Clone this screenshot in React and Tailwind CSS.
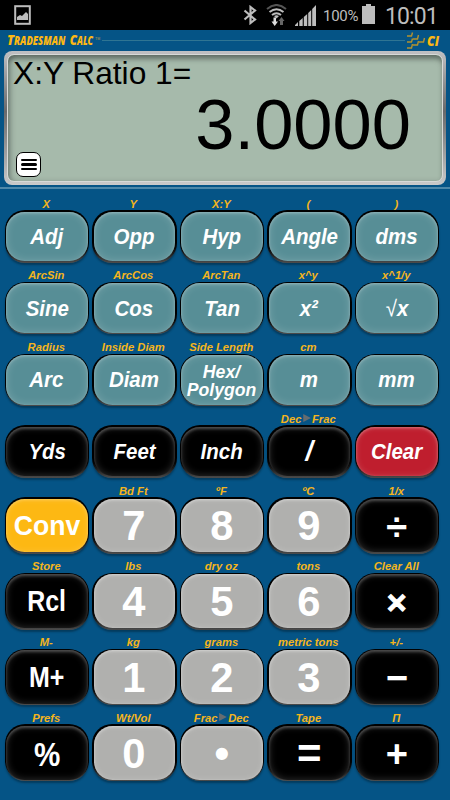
import { clsx } from "clsx";

const TONES = {
  teal: "bg-[#578e96] shadow-[inset_0_1px_3px_0px_rgba(255,255,255,0.3),inset_0_0_9px_1px_rgba(255,255,255,0.16)]",
  black: "bg-black shadow-[inset_0_2px_3px_0px_rgba(255,255,255,0.24),inset_0_0_7px_1px_rgba(255,255,255,0.16)]",
  red: "bg-[#bf1e2e] shadow-[inset_0_1px_3px_0px_rgba(255,255,255,0.35),inset_0_0_7px_0px_rgba(255,255,255,0.15)]",
  yellow: "bg-[#fdb813] shadow-[inset_0_1px_3px_0px_rgba(255,255,255,0.25),inset_0_0_7px_0px_rgba(255,255,255,0.15)]",
  gray: "bg-[#b0b0ae] shadow-[inset_0_1px_3px_0px_rgba(255,255,255,0.4),inset_0_0_7px_0px_rgba(255,255,255,0.18)]",
};

const FACES = {
  fn: "pt-px text-[22px] italic scale-x-[0.93]",
  small: "pt-[2px] text-[18px] leading-[18.5px] italic scale-x-[0.98]",
  slash: "text-[27px] italic",
  word: "pt-px text-[28px] scale-x-[0.95]",
  mem: "pt-px text-[29px] scale-x-[0.86]",
  percent: "pt-0.5 text-[34px] scale-x-[0.87]",
  digit: "pt-px text-[43px] scale-x-[0.97]",
  op: "pt-[3px] text-[38px]",
  times: "pt-px text-[34px] [-webkit-text-stroke:1px_white]",
  equals: "pt-[3px] text-[42px]",
  dot: "pt-0.5 text-[42px]",
};

const k = (text, label = "", tone = "teal", face = "fn") => ({ text, label, tone, face });
const n = (text, label) => k(text, label, "gray", "digit");

const UPPER = [
  [k("Adj", "X"), k("Opp", "Y"), k("Hyp", "X:Y"), k("Angle", "("), k("dms", ")")],
  [k("Sine", "ArcSin"), k("Cos", "ArcCos"), k("Tan", "ArcTan"), k("x²", "x^y"), k("√x", "x^1/y")],
  [k("Arc", "Radius"), k("Diam", "Inside Diam"), k("Hex/\nPolygon", "Side Length", "teal", "small"), k("m", "cm"), k("mm")],
  [k("Yds", "", "black"), k("Feet", "", "black"), k("Inch", "", "black"), k("/", "Dec>Frac", "black", "slash"), k("Clear", "", "red")],
];

const LOWER = [
  [k("Conv", "", "yellow", "word"), n("7", "Bd Ft"), n("8", "ºF"), n("9", "ºC"), k("÷", "1/x", "black", "op")],
  [k("Rcl", "Store", "black", "mem"), n("4", "lbs"), n("5", "dry oz"), n("6", "tons"), k("×", "Clear All", "black", "times")],
  [k("M+", "M-", "black", "mem"), n("1", "kg"), n("2", "grams"), n("3", "metric tons"), k("−", "+/-", "black", "op")],
  [k("%", "Prefs", "black", "percent"), n("0", "Wt/Vol"), k("•", "Frac>Dec", "gray", "dot"), k("=", "Tape", "black", "equals"), k("+", "Π", "black", "op")],
];

function Label({ text }) {
  const parts = text.split(">");
  return (
    <div className="flex h-[15px] scale-x-[0.96] items-center justify-center pr-[2px] pt-px text-[11.7px] leading-[13px] font-bold whitespace-nowrap text-[#f5b51c] italic">
      <span>{parts[0]}</span>
      {parts[1] && (
        <>
          <svg className="mx-px h-2 w-[9px]" viewBox="0 0 9 8">
            <path d="M1 0L9 4L1 8Z" fill="#666c70" />
          </svg>
          <span>{parts[1]}</span>
        </>
      )}
    </div>
  );
}

function Key({ item, tall }) {
  return (
    <div>
      <Label text={item.label} />
      <button
        className={clsx(
          "block w-[84.5px] rounded-[20px] bg-linear-to-b from-black from-60% to-[#4c4c4c] p-[1.5px] shadow-[0_2px_2px_rgba(0,0,0,0.3)]",
          tall ? "h-[56.8px]" : "h-[52.7px]"
        )}
      >
        <span className={clsx("flex h-full w-full items-center justify-center rounded-[18.5px]", TONES[item.tone])}>
          <span className={clsx("text-center leading-none font-bold whitespace-pre text-white", FACES[item.face])}>
            {item.text === "√x" ? (
              <>
                <span className="font-normal not-italic">√</span>x
              </>
            ) : (
              item.text
            )}
          </span>
        </span>
      </button>
    </div>
  );
}

function Row({ items, tall }) {
  return (
    <div className={clsx("flex gap-[3px]", tall ? "h-[75.8px]" : "h-[71.75px]")}>
      {items.map((item, i) => (
        <Key key={i} item={item} tall={tall} />
      ))}
    </div>
  );
}

function StatusBar() {
  return (
    <div className="flex h-[30px] items-center bg-black font-[Roboto,sans-serif] text-[#bdbdbd]">
      <svg className="ml-[14px] h-5 w-[17px]" viewBox="0 0 17 20">
        <rect x="1.2" y="1.2" width="14.6" height="17.6" fill="none" stroke="#bdbdbd" strokeWidth="2" />
        <path d="M3 15V12L6 10L8 11L12 7L14 9V15Z" fill="#bdbdbd" />
      </svg>
      <svg className="ml-[212px] h-5 w-[14px]" viewBox="0 0 14 20" fill="none" stroke="#bdbdbd" strokeWidth="2.2">
        <path d="M1.500 5.5L12 14.5L7.500 18V2L12 5.500L1.500 14.5" />
      </svg>
      <svg className="ml-[9px] h-[22px] w-[21px]" viewBox="0 0 21 22" fill="none">
        <path d="M1 5Q10.500 -3 20 5" stroke="#555" strokeWidth="2" />
        <path d="M3.500 8Q10.500 2.500 17.500 8M6 11Q10.500 7.500 15 11" stroke="#bdbdbd" strokeWidth="2" />
        <path d="M8 12L10.500 14.500L13 12Q10.500 10.500 8 12Z" fill="#bdbdbd" />
        <path d="M7.500 13.500V17.500H5.500L8.700 22L12 17.500H10V13.500Z" fill="#ddd" />
        <path d="M14 21V17H12.500L15.500 13L18.500 17H17V21Z" fill="#666" />
      </svg>
      <svg className="ml-[8px] h-[21px] w-[21px]" viewBox="0 0 21 21" fill="#bdbdbd">
        <path d="M0 21V20L3 17V21ZM4.300 21V16L7.700 13V21ZM8.800 21V12L12.200 9V21ZM13.200 21V8L16.200 5V21ZM17.200 21V4L21 0V21Z" />
      </svg>
      <span className="mt-[2px] ml-[7px] w-[37px] text-[15px] leading-none tracking-[-0.3px] whitespace-nowrap">100%</span>
      <svg className="mb-[2px] ml-[2px] h-5 w-[13px]" viewBox="0 0 13 20" fill="#bdbdbd">
        <path d="M4 0H9V2H13V20H0V2H4Z" />
      </svg>
      <span className="mt-[3px] ml-[10px] text-[23px] leading-none tracking-[-0.9px]">10:01</span>
    </div>
  );
}

function Brand() {
  return (
    <svg className="block h-[21px] w-[450px]" viewBox="0 0 450 21">
      <g fill="#fdb813" fontFamily="Open Sans, sans-serif" fontWeight="800" fontStyle="italic" fontSize="11.5">
        <text x="7" y="14.700" fontSize="13.500" textLength="7" lengthAdjust="spacingAndGlyphs">T</text>
        <text x="14" y="14.700" textLength="51.5" lengthAdjust="spacingAndGlyphs">RADESMAN</text>
        <text x="69.800" y="14.700" fontSize="13.500" textLength="7.2" lengthAdjust="spacingAndGlyphs">C</text>
        <text x="77" y="14.700" textLength="16" lengthAdjust="spacingAndGlyphs">ALC</text>
        <text x="427" y="15.800" fontSize="14.500" textLength="12" lengthAdjust="spacingAndGlyphs">CI</text>
      </g>
      <text x="95" y="9.500" fontSize="3.500" fill="#b99b50" fontFamily="Liberation Sans, sans-serif">TM</text>
      <path d="M102 10.500H405" stroke="#2f7593" />
      <path d="M412.500 2.500L411.500 6H407M412.500 8.500L411.500 12H407M412.500 14L411.500 18H407M418.500 5L417.500 9H413M418.500 11L417.500 15H413M424.500 8L423.500 12H419" fill="none" stroke="#b3922f" strokeWidth="1.400" />
    </svg>
  );
}

function Display() {
  return (
    <div className="mx-1 h-[134px] rounded-[8px] bg-linear-to-b from-[#c1c1c3] via-[#68696b] via-45% to-[#cacaca] p-[3px]">
      <div className="h-full rounded-[7px] border border-[#d7dad8] bg-[#a6baab] shadow-[inset_0_5px_5px_-1px_rgba(60,70,65,0.6),inset_4px_0_5px_-1px_rgba(60,70,65,0.35)]">
        <div className="flex h-full flex-col pl-[5px]">
          <div className="h-[36px] text-[31.700px] leading-[36px] text-black">X:Y Ratio 1=</div>
          <div className="h-[61px] pr-[31px] text-right text-[70.500px] leading-[68px] text-black">3.0000</div>
          <div className="ml-[3px] flex h-[25px] w-[25px] flex-col items-center justify-center gap-[2px] rounded-[7px] border border-black bg-white">
            <div className="h-[2.500px] w-4 rounded-full bg-black" />
            <div className="h-[2.500px] w-4 rounded-full bg-black" />
            <div className="h-[2.500px] w-4 rounded-full bg-black" />
          </div>
        </div>
      </div>
    </div>
  );
}

export default function App() {
  return (
    <div className="h-[800px] w-[450px] overflow-hidden bg-[#055486] font-['Liberation_Sans',sans-serif]">
      <StatusBar />
      <Brand />
      <Display />
      <div className="mt-[2px] h-[2px] bg-[#4e88a9]" />
      <div className="mt-[6px] pl-[4.5px]">
        {UPPER.map((items, i) => (
          <Row key={i} items={items} />
        ))}
        {LOWER.map((items, i) => (
          <Row key={i} items={items} tall />
        ))}
      </div>
    </div>
  );
}
